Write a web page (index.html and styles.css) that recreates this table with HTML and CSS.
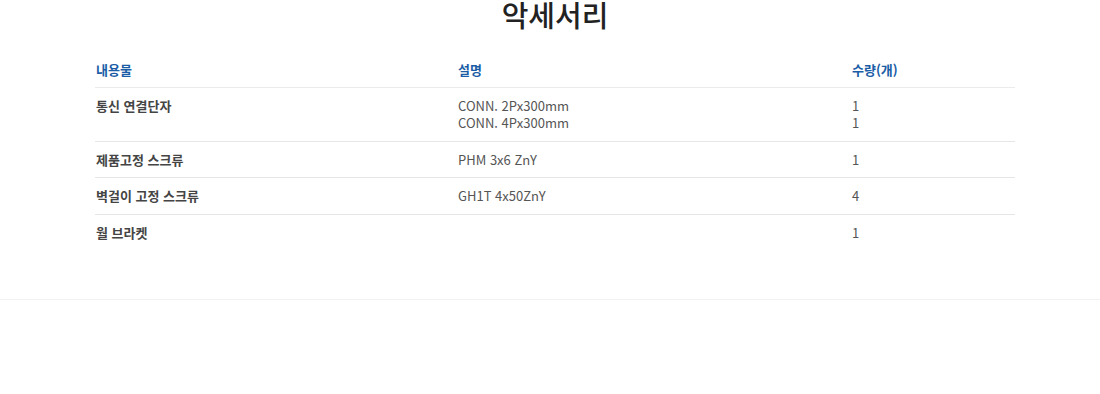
FILE: index.html
```html
<!DOCTYPE html>
<html lang="ko">
<head>
<meta charset="utf-8">
<title>악세서리</title>
<link rel="stylesheet" href="styles.css">
</head>
<body>
<section class="section">
  <div class="wrap">
    <h2 class="title">악세서리</h2>
    <table class="acc">
      <colgroup>
        <col class="c1"><col class="c2"><col class="c3">
      </colgroup>
      <thead>
        <tr><th>내용물</th><th>설명</th><th>수량(개)</th></tr>
      </thead>
      <tbody>
        <tr><td class="name">통신 연결단자</td><td>CONN. 2Px300mm<br>CONN. 4Px300mm</td><td>1<br>1</td></tr>
        <tr><td class="name">제품고정 스크류</td><td>PHM 3x6 ZnY</td><td>1</td></tr>
        <tr><td class="name">벽걸이 고정 스크류</td><td>GH1T 4x50ZnY</td><td>4</td></tr>
        <tr><td class="name">월 브라켓</td><td></td><td>1</td></tr>
      </tbody>
    </table>
  </div>
</section>
</body>
</html>
```
FILE: styles.css
```css
html, body {
  margin: 0;
  padding: 0;
  background: #fff;
}
body {
  font-family: "Noto Sans CJK KR", "Noto Sans", sans-serif;
  color: #555;
}
.section {
  border-bottom: 1px solid #f2f2f2;
  padding-bottom: 49px;
}
.wrap {
  width: 920px;
  margin-left: 95px;
}
.title {
  margin: -7px 0 0;
  font-size: 29px;
  font-weight: 500;
  line-height: 42px;
  color: #222;
  text-align: center;
}
.acc {
  width: 100%;
  border-collapse: collapse;
  table-layout: fixed;
  margin-top: 16px;
  font-size: 13px;
  line-height: 17.55px;
}
.c1 { width: 362px; }
.c2 { width: 394px; }
.acc th {
  text-align: left;
  font-weight: 700;
  color: #1a5da6;
  padding: 10px 0 8px 1px;
  border-bottom: 1px solid #ebebeb;
}
.acc td {
  padding: 9px 0 9px 1px;
  vertical-align: top;
  border-bottom: 1px solid #e6e6e6;
}
.acc tbody tr:last-child td {
  border-bottom: none;
}
.acc td.name {
  font-weight: 700;
  color: #444;
}
```
